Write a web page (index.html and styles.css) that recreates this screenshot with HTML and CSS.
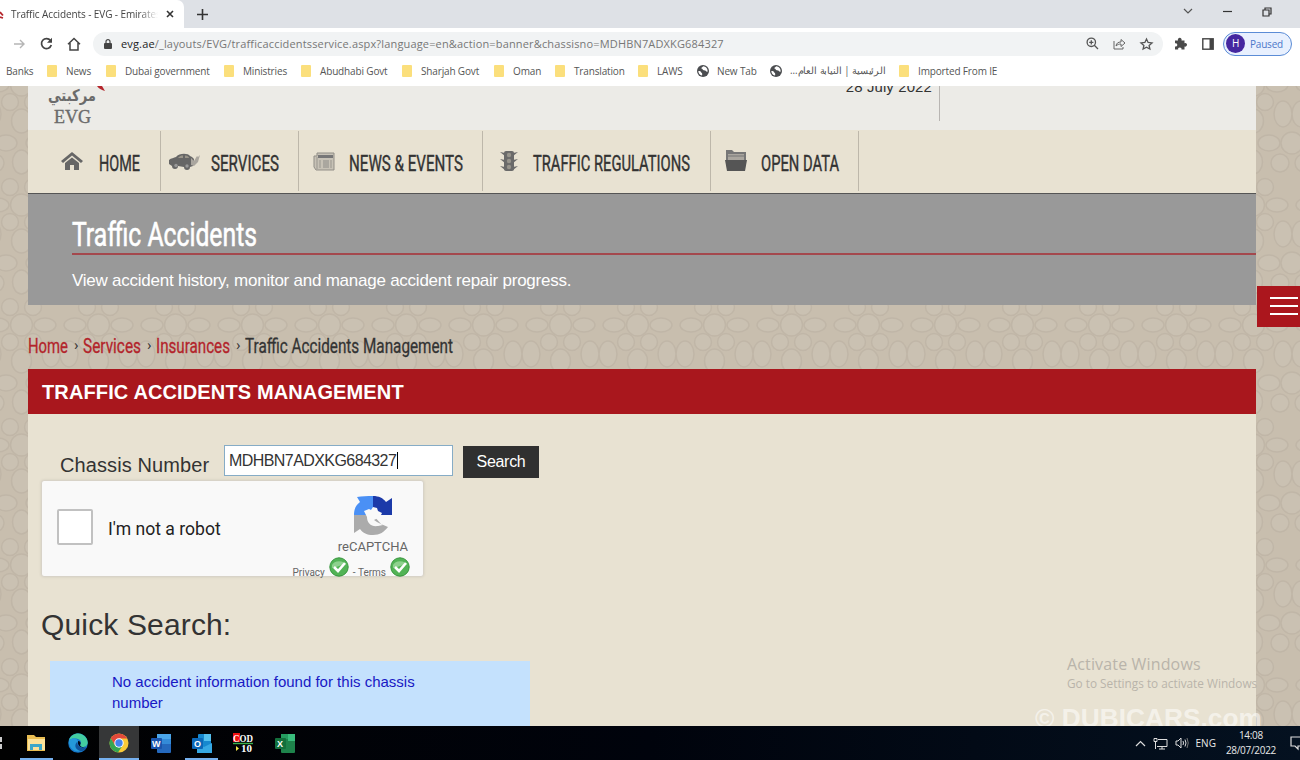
FILE: index.html
```html
<!DOCTYPE html>
<html lang="en">
<head>
    <meta charset="UTF-8">
    <meta name="viewport" content="width=device-width, initial-scale=1.0">
    <title>Traffic Accidents - EVG</title>
    <link rel="stylesheet" href="styles.css">
</head>
<body>
    <!-- Browser window -->
    <div class="tabstrip">
        <div class="tab">
            <svg class="favicon" width="4" height="12" viewBox="0 0 4 12"><path d="M0 4l3 3.500M0 9l3 1" stroke="#b5262c" stroke-width="1.800"/></svg>
            <span class="tab-title">Traffic Accidents - EVG - Emirates</span>
            <svg class="tab-close" width="8" height="8" viewBox="0 0 8 8"><path d="M1 1l6 6M7 1L1 7" stroke="#333" stroke-width="1.6"/></svg>
        </div>
        <svg class="new-tab" width="11" height="11" viewBox="0 0 11 11"><path d="M5.5 0v11M0 5.5h11" stroke="#333" stroke-width="1.6"/></svg>
        <div class="window-buttons">
            <svg width="10" height="7" viewBox="0 0 10 7"><path d="M1 1l4 4 4-4" fill="none" stroke="#555" stroke-width="1.2"/></svg>
            <svg width="9" height="3" viewBox="0 0 9 3"><path d="M0 1.5h9" stroke="#333" stroke-width="1.2"/></svg>
            <svg width="10" height="10" viewBox="0 0 10 10"><path d="M1 3h6v6H1zM3 3V1h6v6H7" fill="none" stroke="#333" stroke-width="1.2"/></svg>
        </div>
    </div>

    <div class="toolbar">
        <div class="nav-buttons">
            <svg width="13" height="12" viewBox="0 0 13 12"><path d="M1 6h10M7 2l4 4-4 4" fill="none" stroke="#b5b5b5" stroke-width="1.4"/></svg>
            <svg width="13" height="13" viewBox="0 0 13 13"><path d="M10.5 3.5A5 5 0 1 0 11.3 8" fill="none" stroke="#444" stroke-width="1.7"/><path d="M12 .8v5H7z" fill="#444"/></svg>
            <svg width="14" height="14" viewBox="0 0 14 14"><path d="M1 7.2L7 1.5l6 5.7M3 6v7h8V6" fill="none" stroke="#444" stroke-width="1.5"/></svg>
        </div>
        <div class="address">
            <svg width="8" height="10" viewBox="0 0 8 10"><rect y="4" width="8" height="6" rx="1" fill="#444"/><path d="M2 4V2.6a2 2 0 0 1 4 0V4" fill="none" stroke="#444" stroke-width="1.2"/></svg>
            <span class="url"><b>evg.ae</b>/_layouts/EVG/trafficaccidentsservice.aspx?language=en&amp;action=banner&amp;chassisno=MDHBN7ADXKG684327</span>
            <div class="address-icons">
                <svg width="13" height="13" viewBox="0 0 13 13"><circle cx="5.3" cy="5.3" r="4.2" fill="none" stroke="#555" stroke-width="1.3"/><path d="M8.3 8.3L12 12M3.2 5.3h4.2M5.3 3.2v4.2" stroke="#555" stroke-width="1.3"/></svg>
                <svg width="13" height="12" viewBox="0 0 13 12"><path d="M1 3v8h9V9M3 8c.5-3 2.200-4 5-4V1.500L12 5 8 8.500V6C6 6 4.500 6.500 3 8z" fill="none" stroke="#666"/></svg>
                <svg width="13" height="12" viewBox="0 0 13 12"><path d="M6.500 1l1.600 3.500 3.900.4-2.900 2.500.8 3.700-3.400-1.900-3.400 1.900.8-3.700L1 4.900l3.900-.4z" fill="none" stroke="#555" stroke-width="1.3"/></svg>
            </div>
        </div>
        <svg class="puzzle" width="13" height="13" viewBox="0 0 13 13"><path d="M1 3.500h3A1.900 1.900 0 1 1 7.500 3.500H10.500V6.200A1.800 1.800 0 1 1 10.500 9.500V12.500H7.500A1.700 1.700 0 1 0 4.200 12.500H1V9.500A1.700 1.700 0 1 0 1 6.300z" fill="#4a4a4a"/></svg>
        <svg class="panel-icon" width="12" height="12" viewBox="0 0 12 12"><rect x=".8" y=".8" width="10.400" height="10.400" fill="none" stroke="#444" stroke-width="1.400"/><path d="M7.500 1H11v10H7.500z" fill="#444"/></svg>
        <div class="profile"><span class="avatar">H</span><span>Paused</span></div>
    </div>

    <div class="bookmarks">
        <span>Banks</span>
        <span><i class="folder"></i>News</span>
        <span><i class="folder"></i>Dubai government</span>
        <span><i class="folder"></i>Ministries</span>
        <span><i class="folder"></i>Abudhabi Govt</span>
        <span><i class="folder"></i>Sharjah Govt</span>
        <span><i class="folder"></i>Oman</span>
        <span><i class="folder"></i>Translation</span>
        <span><i class="folder"></i>LAWS</span>
        <span><svg class="globe" width="12" height="12" viewBox="0 0 12 12"><circle cx="6" cy="6" r="6" fill="#4b4d50"/><path d="M1.300 6c2 0 3 .5 3 1.800 1 .2 1.200 1.500.7 2.700-2.200-.5-3.700-2.300-3.700-4.500zM6 1.300c-.2 1.200-1.800.9-1.600 2.300.9.400 1.500.6 1.500 1.400 1.500.5 3 .1 3.300 1.500l1.400.3C11 4 9 1.500 6 1.300z" fill="#fff"/></svg>New Tab</span>
        <span><svg class="globe" width="12" height="12" viewBox="0 0 12 12"><circle cx="6" cy="6" r="6" fill="#4b4d50"/><path d="M1.300 6c2 0 3 .5 3 1.800 1 .2 1.200 1.500.7 2.700-2.200-.5-3.700-2.300-3.700-4.500zM6 1.300c-.2 1.200-1.800.9-1.600 2.300.9.400 1.500.6 1.500 1.400 1.500.5 3 .1 3.300 1.500l1.400.3C11 4 9 1.500 6 1.300z" fill="#fff"/></svg><svg class="arabic" width="96" height="16"><text x="0" y="11" textLength="96" lengthAdjust="spacingAndGlyphs" direction="rtl" text-anchor="end">الرئيسية | النيابة العام...</text></svg></span>
        <span><i class="folder"></i>Imported From IE</span>
    </div>

    <!-- Site -->
    <div class="page">
        <div class="container">
            <div class="site-header">
                <div class="logo">
                    <svg class="logo-mark" width="9" height="6" viewBox="0 0 9 6"><path d="M0 0h5l3 5C5 4 2 3 0 0z" fill="#b5262c"/></svg>
                    <svg class="logo-text" width="60" height="44">
                        <text class="logo-ar" x="0" y="15" textLength="48" lengthAdjust="spacingAndGlyphs" direction="rtl" text-anchor="end">مركبتي</text>
                        <text class="logo-en" x="6" y="37" textLength="37" lengthAdjust="spacingAndGlyphs">EVG</text>
                    </svg>
                </div>
                <div class="date"><span>28 July 2022</span></div>
            </div>

            <div class="menu">
                <div class="menu-item home">
                    <svg width="22" height="20" viewBox="0 0 22 20"><path d="M0 10L11 1l11 9-2 2-9-7.500L2 12z" fill="#666"/><path d="M4 12l7-5.500 7 5.500v7h-5v-5H9v5H4z" fill="#666"/></svg>
                    <svg width="41" height="30"><text x="0" y="22" textLength="41" lengthAdjust="spacingAndGlyphs">HOME</text></svg>
                </div>
                <div class="menu-item services">
                    <svg width="32" height="16" viewBox="0 0 32 16"><path d="M0 7c2-2 5-2 7-3 3-4 12-4 14-1l2 1 2 2-1 7-3 1a3 3 0 0 1-6 0l-6-1a3 3 0 0 1-6 0l-3-2z" fill="#666"/><path d="M9 5c2-3 5-2.500 5-2.500V5zM16 2.500c3 0 4 1.500 4 2.500h-4z" fill="#999489"/><path d="M22 5l3 3 3-5 1 1 2-2-2 7-4 4-3-1z" fill="#aaa69f"/><circle cx="7" cy="12.500" r="1.700" fill="#999"/><circle cx="18" cy="13" r="1.700" fill="#999"/></svg>
                    <svg width="68" height="30"><text x="0" y="22" textLength="68" lengthAdjust="spacingAndGlyphs">SERVICES</text></svg>
                </div>
                <div class="menu-item news">
                    <svg width="22" height="19" viewBox="0 0 22 19"><path d="M4 1h17v17H3L1 15V4h3z" fill="#c7c2b6" stroke="#918e87"/><path d="M5 3h15v3H5z" fill="#777"/><path d="M7 8v8M18 8v8M4 5v12" stroke="#9a978f"/><path d="M10 8h6v8h-6z" fill="#aaa79f"/></svg>
                    <svg width="114" height="30"><text x="0" y="22" textLength="114" lengthAdjust="spacingAndGlyphs">NEWS &amp; EVENTS</text></svg>
                </div>
                <div class="menu-item traffic">
                    <svg width="18" height="22" viewBox="0 0 18 22"><rect x="4" y="1" width="10" height="20" rx="2" fill="#6a6a6a"/><path d="M0 2l5 1v3zM0 9l5 1v3zM0 16l5 1v3zM18 2l-5 1v3zM18 9l-5 1v3zM18 16l-5 1v3z" fill="#6a6a6a"/><g fill="#98958d"><circle cx="9" cy="5" r="2.200"/><circle cx="9" cy="11" r="2.200"/><circle cx="9" cy="17" r="2.200"/></g></svg>
                    <svg width="157" height="30"><text x="0" y="22" textLength="157" lengthAdjust="spacingAndGlyphs">TRAFFIC REGULATIONS</text></svg>
                </div>
                <div class="menu-item data">
                    <svg width="22" height="22" viewBox="0 0 22 22"><path d="M1 0h6l2 2h12v8H1z" fill="#777"/><path d="M3 4h16v6H3z" fill="#aaa69f"/><path d="M3 6h16" stroke="#777"/><path d="M0 10h22l-2 11H2z" fill="#555"/></svg>
                    <svg width="78" height="30"><text x="0" y="22" textLength="78" lengthAdjust="spacingAndGlyphs">OPEN DATA</text></svg>
                </div>
            </div>

            <div class="banner">
                <h1><svg width="186" height="42"><text x="0" y="35" textLength="185" lengthAdjust="spacingAndGlyphs">Traffic Accidents</text></svg></h1>
                <p>View accident history, monitor and manage accident repair progress.</p>
            </div>

            <div class="breadcrumb">
                <svg class="link" width="40" height="30"><text x="0" y="22" textLength="40" lengthAdjust="spacingAndGlyphs">Home</text></svg>
                <span>›</span>
                <svg class="link" width="58" height="30"><text x="0" y="22" textLength="58" lengthAdjust="spacingAndGlyphs">Services</text></svg>
                <span>›</span>
                <svg class="link" width="74" height="30"><text x="0" y="22" textLength="74" lengthAdjust="spacingAndGlyphs">Insurances</text></svg>
                <span>›</span>
                <svg width="208" height="30"><text x="0" y="22" textLength="208" lengthAdjust="spacingAndGlyphs">Traffic Accidents Management</text></svg>
            </div>

            <h2 class="section-title">TRAFFIC ACCIDENTS MANAGEMENT</h2>

            <div class="content">
                <div class="search-row">
                    <label>Chassis Number</label>
                    <div class="chassis-input">MDHBN7ADXKG684327<i class="caret"></i></div>
                    <button class="search-button">Search</button>
                </div>

                <div class="captcha">
                    <span class="checkbox"></span>
                    <span class="captcha-label">I'm not a robot</span>
                    <div class="captcha-brand">
                        <svg class="captcha-logo" width="38" height="39" viewBox="0 0 38 39">
                            <path d="M19 0v19H0c0-6 2-10 6-13L3 1c5-1 10-1 16-1z" fill="#4a90f5"/>
                            <path d="M19 0c6 0 10 2 13 6l6-4v17H19z" fill="#1c3aa9"/>
                            <path d="M0 19h19l8 9 7 3c-4 5-8 8-15 8-6 0-10-2-13-6l-6 4z" fill="#ababab"/>
                            <path d="M10 15l5-2 2 1 2-3 4 1 1 3 4 2-2 4-6 3 3 2 6 3-5 1c-7 1-11-3-11-9z" fill="#f9f9f9"/>
                        </svg>
                        <span class="captcha-name">reCAPTCHA</span>
                    </div>
                    <div class="captcha-links">
                        <span>Privacy</span>
                        <svg width="20" height="20" viewBox="0 0 20 20"><circle cx="10" cy="10" r="9.200" fill="#52b356" stroke="#37963d"/><path d="M3 8a7.500 6 0 0 1 14 0C12 7 8 11 3 11z" fill="#8ed18e"/><path d="M5 10l4 4 7-8" fill="none" stroke="#fff" stroke-width="2.600"/></svg>
                        <span>- Terms</span>
                        <svg width="20" height="20" viewBox="0 0 20 20"><circle cx="10" cy="10" r="9.200" fill="#52b356" stroke="#37963d"/><path d="M3 8a7.500 6 0 0 1 14 0C12 7 8 11 3 11z" fill="#8ed18e"/><path d="M5 10l4 4 7-8" fill="none" stroke="#fff" stroke-width="2.600"/></svg>
                    </div>
                </div>

                <h3>Quick Search:</h3>
                <div class="result">No accident information found for this chassis number</div>
            </div>
        </div>
        <div class="side-menu"><i></i><i></i><i></i></div>
        <div class="activate"><p>Activate Windows</p><span>Go to Settings to activate Windows</span></div>
        <div class="watermark">© DUBICARS.com</div>
    </div>

    <!-- Windows taskbar -->
    <div class="taskbar">
        <div class="task view"><svg width="2" height="14" viewBox="0 0 2 14"><path d="M0 1h2v5H0zM0 8h2v5H0z" fill="#ccc"/></svg></div>
        <div class="task open"><svg width="18" height="16" viewBox="0 0 18 16"><path d="M0 0h7l2 2h9v14H0z" fill="#e9bd52"/><path d="M1 4h17v11H1z" fill="#fbe29a"/><path d="M3 15V9h12v6h-3v-3H6v3z" fill="#3ba7c9"/></svg></div>
        <div class="task"><svg width="20" height="20" viewBox="0 0 20 20"><circle cx="10" cy="10" r="9.800" fill="#1676c8"/><path d="M1 7C3 1 10-1 15 2c5 3 6 9 3 11-2 2-6 1-6-1 2-2 1-5-2-6-4-1-7 0-9 1z" fill="#43cda0"/><path d="M1 7c4-3 9-2 9 2-3 2-3 7 3 9-7 2-13-4-12-11z" fill="#2499d9"/><path d="M9 9c-3 3-2 8 4 9 3 0 5-2 6-4-5 2-10 0-10-5z" fill="#10549b"/><path d="M10 8c3 0 3 3 2 4 0 2 4 3 6 1-3 3-9 1-8-5z" fill="#020713"/></svg></div>
        <div class="task active"><svg width="20" height="20" viewBox="0 0 20 20"><circle cx="10" cy="10" r="9.500" fill="#f9c938"/><path d="M1.800 5.200A9.500 9.500 0 0 1 18.200 5.500H10L5.500 12z" fill="#e2493a"/><path d="M1.800 5.200A9.500 9.500 0 0 0 9 19.500l5-7.500-8 .5z" fill="#35a653"/><circle cx="10" cy="10" r="4.700" fill="#fff"/><circle cx="10" cy="10" r="3.700" fill="#4384ee"/></svg></div>
        <div class="task"><svg width="20" height="19" viewBox="0 0 20 19"><rect x="6" width="14" height="19" rx="1" fill="#2569bd"/><path d="M6 0h14v5H6z" fill="#4ba5e8"/><path d="M6 5h14v5H6z" fill="#348bd8"/><rect y="4" width="11" height="11" rx="1" fill="#1a55ad"/><text class="app-letter" x="1" y="13">W</text></svg></div>
        <div class="task open"><svg width="20" height="19" viewBox="0 0 20 19"><rect x="6" width="13" height="14" rx="1" fill="#1688cf"/><path d="M12 0h7v7h-7z" fill="#55c0ee"/><path d="M5 9l7 4 8-4v10H5z" fill="#36a8e4"/><rect y="4" width="11" height="11" rx="1" fill="#0b68b8"/><text class="app-letter" x="2" y="13">O</text></svg></div>
        <div class="task cod"><svg width="22" height="20" viewBox="0 0 22 20"><rect x="1" width="7" height="9" fill="#e11"/><text x="1" y="8.500" textLength="20" lengthAdjust="spacingAndGlyphs">COD</text><path d="M1 10.500h20" stroke="#39b04a" stroke-width="1.400"/><path d="M4 13l3 2.500L4 18z" fill="#f3e84a"/><text x="9" y="19" textLength="11" lengthAdjust="spacingAndGlyphs">10</text></svg></div>
        <div class="task"><svg width="20" height="19" viewBox="0 0 20 19"><rect x="6" width="14" height="19" rx="1" fill="#1e834b"/><path d="M6 0h7v5H6z" fill="#259d60"/><path d="M13 0h7v7h-7z" fill="#39bd7c"/><rect y="4" width="11" height="11" rx="1" fill="#13703c"/><text class="app-letter" x="2" y="13">X</text></svg></div>
        <div class="tray">
            <svg width="11" height="7" viewBox="0 0 11 7"><path d="M1 6l4.500-4.500L10 6" fill="none" stroke="#ddd" stroke-width="1.200"/></svg>
            <svg width="15" height="13" viewBox="0 0 15 13"><path d="M5 2.500h9v7H4M9 9.500V12M6 12h6M1 1.500h3v3H1zM2.500 5v7" fill="none" stroke="#ddd"/></svg>
            <svg width="14" height="12" viewBox="0 0 14 12"><path d="M1 4h2l3-3v10L3 8H1zM8 4q1 2 0 4M10 2.500q2 3.500 0 7" fill="none" stroke="#ddd"/><path d="M12 1q2.500 5 0 10" fill="none" stroke="#777"/></svg>
            <span class="lang">ENG</span>
            <div class="clock"><span>14:08</span><span>28/07/2022</span></div>
            <svg width="10" height="14" viewBox="0 0 10 14"><path d="M10 1H1v9h4l3 3v-3h2" fill="none" stroke="#ddd" stroke-width="1.200"/></svg>
        </div>
    </div>
</body>
</html>
```
FILE: styles.css
```css
* {
    box-sizing: border-box;
}

body {
    margin: 0;
    width: 1300px;
    height: 760px;
    overflow: hidden;
    display: flex;
    flex-direction: column;
    font-family: "Liberation Sans", Arial, sans-serif;
    color: #333;
}

svg {
    display: block;
    flex-shrink: 0;
    overflow: visible;
}

h1, h2, h3, p {
    margin: 0;
    font-weight: normal;
}

/* Browser window */
.tabstrip, .toolbar, .bookmarks, .taskbar {
    font-family: "Open Sans", "Noto Sans", sans-serif;
    flex-shrink: 0;
}

.tabstrip {
    height: 28px;
    display: flex;
    align-items: center;
    background-color: #dee1e6;
}

.tab {
    width: 184px;
    height: 28px;
    display: flex;
    align-items: center;
    background-color: #fff;
    border-radius: 0 7px 0 0;
}

.favicon {
    overflow: hidden;
}

.tab-title {
    width: 147px;
    margin-left: 7px;
    overflow: hidden;
    white-space: nowrap;
    font-size: 10px;
    letter-spacing: -0.1px;
    color: #444;
    -webkit-mask-image: linear-gradient(to right, #000 87%, transparent);
    mask-image: linear-gradient(to right, #000 87%, transparent);
}

.tab-close {
    margin-left: 8px;
}

.new-tab {
    margin-left: 13px;
}

.window-buttons {
    margin-left: auto;
    padding: 0 28px 5px 0;
    display: flex;
    align-items: center;
    gap: 30px;
}

.toolbar {
    height: 31px;
    display: flex;
    align-items: center;
    background-color: #fff;
}

.nav-buttons {
    display: flex;
    align-items: center;
    gap: 14px;
    padding-left: 13px;
}

.address {
    width: 1070px;
    height: 24px;
    margin-left: 12px;
    padding: 0 10px 0 11px;
    display: flex;
    align-items: center;
    background-color: #f1f3f4;
    border-radius: 12px;
}

.url {
    margin-left: 9px;
    font-size: 11px;
    letter-spacing: 0.155px;
    color: #777;
    white-space: nowrap;
}

.url b {
    font-weight: normal;
    color: #222;
}

.address-icons {
    margin-left: auto;
    display: flex;
    align-items: center;
    gap: 14px;
}

.puzzle {
    margin-left: 11px;
}

.panel-icon {
    margin-left: 15px;
}

.profile {
    width: 69px;
    height: 24px;
    margin-left: 9px;
    padding-left: 2px;
    display: flex;
    align-items: center;
    gap: 5px;
    border: 1px solid #5b8cd6;
    border-radius: 12px;
    background-color: #e8f0fe;
    color: #4d78c9;
    font-size: 10px;
    letter-spacing: -0.2px;
}

.avatar {
    width: 19px;
    height: 19px;
    border-radius: 50%;
    background-color: #4527a0;
    color: #fff;
    text-align: center;
    line-height: 19px;
}

.bookmarks {
    height: 27px;
    padding: 0 0 3px 6px;
    display: grid;
    grid-template-columns: 41px 59px 118px 77px 101px 92px 61px 83px 59px 73px 129px auto;
    align-items: center;
    background-color: #fff;
    font-size: 10px;
    letter-spacing: -0.15px;
    color: #555;
    white-space: nowrap;
}

.bookmarks > span {
    display: flex;
    align-items: center;
}

.folder {
    width: 10px;
    height: 12px;
    margin-right: 9px;
    border-radius: 1px;
    background-color: #fbdf7c;
}

.globe {
    margin-right: 8px;
}

.arabic text {
    fill: #555;
    font-size: 10px;
    letter-spacing: 0;
}

/* Site */
.page {
    height: 640px;
    flex-shrink: 0;
    position: relative;
    overflow: hidden;
    background-color: #c8beae;
    background-image: url("data:image/svg+xml,%3Csvg xmlns='http://www.w3.org/2000/svg' width='77' height='120'%3E%3Cg fill='%23cac1b2' stroke='%23c0b6a7' stroke-width='1.500'%3E%3Ccircle cx='38.500' cy='30' r='11'/%3E%3Cellipse cx='15' cy='30' rx='11' ry='7'/%3E%3Cellipse cx='62' cy='30' rx='11' ry='7'/%3E%3Ccircle cx='27' cy='47' r='8.500'/%3E%3Ccircle cx='50' cy='47' r='8.500'/%3E%3Ccircle cx='27' cy='12' r='8.500'/%3E%3Ccircle cx='50' cy='12' r='8.500'/%3E%3Cellipse cx='9' cy='59' rx='9' ry='13'/%3E%3Cellipse cx='38.500' cy='66' rx='10' ry='12'/%3E%3Cellipse cx='68' cy='59' rx='9' ry='13'/%3E%3Ccircle cx='0' cy='88' r='11'/%3E%3Ccircle cx='77' cy='88' r='11'/%3E%3Cellipse cx='23' cy='88' rx='11' ry='8'/%3E%3Cellipse cx='54' cy='88' rx='11' ry='8'/%3E%3Ccircle cx='12' cy='108' r='9'/%3E%3Ccircle cx='65' cy='108' r='9'/%3E%3Cellipse cx='38.500' cy='107' rx='9' ry='12'/%3E%3C/g%3E%3C/svg%3E");
    background-position: 60px 89px;
}

.container {
    width: 1228px;
    margin-left: 28px;
}

.site-header {
    height: 44px;
    display: flex;
    overflow: hidden;
    background-color: #ecebe7;
}

.logo {
    width: 80px;
    position: relative;
}

.logo-mark {
    position: absolute;
    left: 69px;
    top: 0;
}

.logo-text {
    margin-left: 20px;
}

.logo-text text {
    fill: #6b6b6b;
}

.logo-ar {
    font: bold 16px "DejaVu Sans", sans-serif;
}

.logo-en {
    font: 19px "Liberation Serif", serif;
    stroke: #6b6b6b;
    stroke-width: 0.4px;
}

.date {
    width: 832px;
    height: 35px;
    border-right: 1px solid #b8b5b2;
    font-size: 15px;
    letter-spacing: 0.1px;
    line-height: 18px;
    text-align: right;
}

.date span {
    display: block;
    margin: -8px 7px 0 0;
}

.menu {
    height: 64px;
    display: flex;
    background-color: #e8e2d2;
    border-bottom: 1px solid #555;
}

.menu-item {
    height: 60px;
    margin-top: 1px;
    display: flex;
    align-items: center;
    border-right: 1px solid #bdb7aa;
}

.menu-item text {
    font: 22px Roboto, sans-serif;
    fill: #333;
    stroke: #333;
    stroke-width: 0.4px;
}

.menu-item svg:last-child {
    margin-top: 5px;
}

.home {
    width: 133px;
    padding-left: 33px;
    gap: 16px;
}

.services {
    width: 138px;
    padding-left: 8px;
    gap: 10px;
}

.news {
    width: 184px;
    padding-left: 14px;
    gap: 14px;
}

.traffic {
    width: 228px;
    padding-left: 17px;
    gap: 15px;
}

.data {
    width: 148px;
    padding-left: 14px;
    gap: 14px;
}

.banner {
    height: 111px;
    padding-left: 44px;
    background-color: #999;
    color: #fff;
}

.banner h1 {
    height: 61px;
    padding-top: 17px;
    border-bottom: 2px solid #a4484d;
}

.banner h1 text {
    font: 34px Roboto, sans-serif;
    fill: #fff;
    stroke: #fff;
    stroke-width: 0.6px;
}

.banner p {
    padding-top: 16px;
    font-size: 17px;
    line-height: 20px;
    letter-spacing: -0.24px;
}

.breadcrumb {
    height: 64px;
    padding-top: 26px;
    display: flex;
}

.breadcrumb text {
    font: 21px Roboto, sans-serif;
    fill: #333;
    stroke: #333;
    stroke-width: 0.3px;
}

.breadcrumb .link text {
    fill: #b3242b;
    stroke: #b3242b;
}

.breadcrumb span {
    width: 15px;
    padding-left: 6px;
    font: 15px/29px Roboto, sans-serif;
}

.section-title {
    height: 45px;
    padding-left: 14px;
    background-color: #a9171d;
    color: #fff;
    font-size: 20px;
    font-weight: bold;
    letter-spacing: 0.13px;
    line-height: 46px;
}

.content {
    height: 312px;
    padding: 31px 13px 0;
    background-color: #e8e2d2;
}

.search-row {
    height: 35px;
    display: flex;
    padding-left: 19px;
}

.search-row label {
    width: 164px;
    font-size: 20px;
    letter-spacing: 0.1px;
    line-height: 40px;
}

.chassis-input {
    width: 229px;
    height: 31px;
    padding-left: 4px;
    display: flex;
    align-items: center;
    background-color: #fff;
    border: 1px solid #86acc6;
    font-size: 16px;
    letter-spacing: -0.57px;
}

.caret {
    width: 1px;
    height: 17px;
    margin-left: 1px;
    background-color: #000;
}

.search-button {
    width: 76px;
    height: 32px;
    margin: 1px 0 0 10px;
    padding: 0;
    border: none;
    background-color: #303030;
    color: #fff;
    font-family: "Liberation Sans", Arial, sans-serif;
    font-size: 16px;
    letter-spacing: -0.3px;
}

.captcha {
    width: 383px;
    height: 97px;
    padding-left: 15px;
    position: relative;
    display: flex;
    align-items: center;
    background-color: #f9f9f9;
    border: 1px solid #d8d3c8;
    border-radius: 3px;
    box-shadow: 0 0 3px rgba(0, 0, 0, 0.1);
    font-family: Roboto, sans-serif;
}

.checkbox {
    width: 36px;
    height: 36px;
    margin-bottom: 3px;
    background-color: #fff;
    border: 2px solid #c1c1c1;
    border-radius: 2px;
}

.captcha-label {
    margin-left: 15px;
    font-size: 17.6px;
    color: #222;
}

.captcha-brand {
    position: absolute;
    right: 15px;
    top: 15px;
    display: flex;
    flex-direction: column;
    align-items: center;
}

.captcha-name {
    margin-top: 3px;
    font-size: 13px;
    line-height: 17px;
    color: #666;
}

.captcha-links {
    position: absolute;
    right: 13px;
    bottom: -4px;
    display: flex;
    align-items: flex-end;
    gap: 4px;
    font-size: 10px;
    line-height: 14px;
    color: #666;
}

.captcha-links svg {
    margin-bottom: 3px;
}

.content h3 {
    margin-top: 28px;
    font-size: 30px;
    letter-spacing: 0.15px;
    line-height: 40px;
}

.result {
    width: 480px;
    height: 70px;
    margin: 16px 0 0 9px;
    padding: 10px 90px 0 62px;
    background-color: #c4e1fd;
    color: #1818c4;
    font-size: 15px;
    line-height: 21px;
}

.side-menu {
    width: 43px;
    height: 41px;
    position: absolute;
    right: 0;
    top: 200px;
    padding: 11px 2px 0 13px;
    display: flex;
    flex-direction: column;
    gap: 6px;
    background-color: #ab161d;
}

.side-menu i {
    height: 2px;
    background-color: #fff;
}

.activate {
    position: absolute;
    left: 1067px;
    top: 568px;
    white-space: nowrap;
    font-family: "Open Sans", sans-serif;
    font-size: 11.8px;
    color: #b9b4aa;
}

.activate p {
    font-size: 16px;
    letter-spacing: 0.15px;
    line-height: 21px;
}

.watermark {
    position: absolute;
    left: 1035px;
    top: 618px;
    font-size: 26.3px;
    font-weight: bold;
    line-height: 28px;
    color: rgba(255, 255, 255, 0.55);
    white-space: nowrap;
}

/* Windows taskbar */
.taskbar {
    height: 34px;
    display: flex;
    background: linear-gradient(to right, #010101, #00030c 50%, #041120);
}

.task {
    width: 40px;
    height: 34px;
    margin-right: 1.5px;
    display: flex;
    align-items: center;
    justify-content: center;
}

.view {
    width: 15px;
    justify-content: flex-start;
}

.open {
    border-bottom: 2px solid #76b0ee;
    width: 33px;
    margin: 0 5px 0 3px;
    padding-top: 2px;
}

.active {
    background-color: #363738;
    border-bottom: 2px solid #76b0ee;
    padding-top: 2px;
}

.app-letter {
    font: bold 9px "Liberation Sans", sans-serif;
    fill: #fff;
}

.cod text {
    font: bold 11px "Liberation Serif", serif;
    fill: #fff;
}

.tray {
    margin-left: auto;
    display: flex;
    align-items: center;
    color: #e8e8e8;
    font-size: 10px;
}

.tray svg {
    margin-right: 7px;
}

.tray > svg:last-child {
    margin-right: 0;
}

.lang {
    margin-right: 10px;
}

.clock {
    margin-right: 14px;
    display: flex;
    flex-direction: column;
    align-items: center;
    line-height: 15px;
    letter-spacing: -0.3px;
}
```
